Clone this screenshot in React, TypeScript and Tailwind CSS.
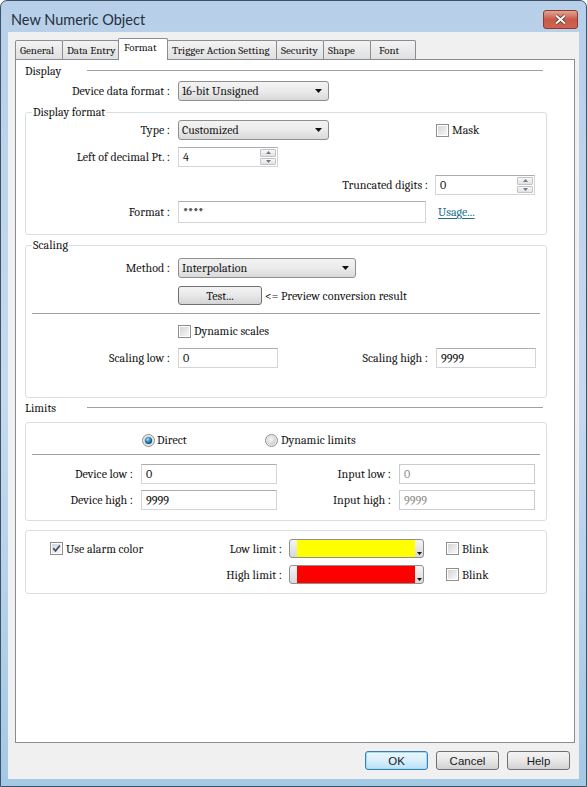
import type { ReactNode } from "react";

const Arrow = () => (
  <svg width="7" height="4" viewBox="0 0 7 4">
    <path d="M0 0h7L3.5 4z" fill="#111" />
  </svg>
);

const Select = ({ value, className }: { value: string; className: string }) => (
  <div
    className={`h-[20px] flex items-center justify-between pl-[3px] pr-[6px] rounded-[3px] border border-[#8e8f8f] bg-gradient-to-b from-[#f3f3f3] via-[#ebebeb] to-[#d9d9d9] ${className}`}
  >
    <span>{value}</span>
    <Arrow />
  </div>
);

const TextBox = ({
  value,
  className,
  disabled,
  h = "h-[20px]",
}: {
  value: string;
  className: string;
  disabled?: boolean;
  h?: string;
}) => (
  <div
    className={`${h} flex items-center pl-[4px] bg-white border ${
      disabled
        ? "border-[#c9ccd0] text-[#8e8e8e]"
        : "border-[#d2d5da] border-t-[#abadb3] text-[#111]"
    } ${className}`}
  >
    {value}
  </div>
);

const SpinBtn = ({ up }: { up?: boolean }) => (
  <div className="flex-1 flex items-center justify-center rounded-[1px] border border-[#c3c3c3] bg-gradient-to-b from-[#f8f8f8] to-[#e2e2e2]">
    <svg width="5" height="3" viewBox="0 0 5 3">
      <path d={up ? "M0 3h5L2.5 0z" : "M0 0h5L2.5 3z"} fill="#6d7a8a" />
    </svg>
  </div>
);

const Spin = ({ value }: { value: string }) => (
  <div className="w-[100px] h-[20px] flex bg-white border border-[#d2d5da] border-t-[#abadb3]">
    <div className="flex-1 flex items-center pl-[4px]">{value}</div>
    <div className="w-[18px] flex flex-col gap-px p-px">
      <SpinBtn up />
      <SpinBtn />
    </div>
  </div>
);

const CheckBox = ({ checked }: { checked?: boolean }) => (
  <div className="relative w-[13px] h-[13px] shrink-0 border border-[#8e8f8f] bg-white p-px">
    <div className="w-full h-full bg-gradient-to-br from-[#d6d6d6] to-[#f7f7f7]" />
    {checked && (
      <svg className="absolute left-[1px] top-[1px]" width="9" height="9" viewBox="0 0 9 9">
        <path d="M1.3 4.3L3.5 6.9L7.8 1.4" fill="none" stroke="#3d4f66" strokeWidth="1.7" />
      </svg>
    )}
  </div>
);

const Radio = ({ on }: { on?: boolean }) => (
  <svg width="13" height="13" viewBox="0 0 13 13" className="shrink-0">
    <defs>
      <radialGradient id={on ? "rOn" : "rOff"} cx="40%" cy="35%" r="65%">
        <stop offset="0" stopColor={on ? "#a9e0f4" : "#f6f6f6"} />
        <stop offset="0.55" stopColor={on ? "#2a86b4" : "#e3e3e3"} />
        <stop offset="1" stopColor={on ? "#0d4a70" : "#cfcfcf"} />
      </radialGradient>
    </defs>
    <circle cx="6.5" cy="6.5" r="6" fill="#ededed" stroke="#8e8f8f" />
    <circle cx="6.5" cy="6.5" r="4.6" fill="#d8d8d8" />
    <circle cx="6.5" cy="6.5" r={on ? 3.6 : 4.2} fill={`url(#${on ? "rOn" : "rOff"})`} />
  </svg>
);

const Sep = ({ className }: { className: string }) => (
  <div className={`h-[2px] border-t border-[#a0a0a0] border-b border-b-white ${className}`} />
);

const ColorPick = ({ fill }: { fill: string }) => (
  <div className="w-[135px] h-[19px] flex rounded-[3px] border border-[#8e8f8f] bg-gradient-to-b from-[#f5f5f5] to-[#d8d8d8] overflow-hidden">
    <div className="w-[7px]" />
    <div className={`flex-1 ${fill}`} />
    <div className="w-[8px] flex items-end justify-center pb-[2px]">
      <svg width="5" height="3" viewBox="0 0 5 3">
        <path d="M0 0h5L2.5 3z" fill="#111" />
      </svg>
    </div>
  </div>
);

const Lbl = ({ children, className }: { children: ReactNode; className: string }) => (
  <div className={`text-right shrink-0 ${className}`}>{children}</div>
);

const WinBtn = ({ label, primary }: { label: string; primary?: boolean }) => (
  <div
    className={`w-[63px] h-[19px] flex items-center justify-center rounded-[3px] border text-[11.5px] font-[family-name:'Liberation_Sans',Arial,sans-serif] text-[#1a1a1a] ${
      primary
        ? "border-[#3c7fb1] bg-gradient-to-b from-[#ecf7fd] via-[#d9effb] to-[#b9e1f7] shadow-[inset_0_0_0_1px_#9fdcf6]"
        : "border-[#707070] bg-gradient-to-b from-[#f3f3f3] via-[#e8e8e8] to-[#d2d2d2]"
    }`}
  >
    {label}
  </div>
);

const tabs = [
  { name: "General", w: "w-[48px]" },
  { name: "Data Entry", w: "w-[57px]" },
  { name: "Format", w: "w-[50px]", active: true },
  { name: "Trigger Action Setting", w: "w-[110px]" },
  { name: "Security", w: "w-[48px]" },
  { name: "Shape", w: "w-[48px]" },
  { name: "Font", w: "w-[46px]", pad: "pl-[8px]" },
];

export default function App() {
  return (
    <div className="w-[587px] h-[787px] flex flex-col border border-[#3f5368] rounded-t-[7px] bg-gradient-to-b from-[#b7cfe8] via-[#c6daef] to-[#a4c9e5] overflow-hidden">
      {/* title bar */}
      <div className="h-[31px] flex items-start justify-between pl-[10px] pr-[8px]">
        <span className="mt-[9px] text-[14.5px] leading-[20px] text-[#25303d] font-[family-name:Lato,'Noto_Sans',sans-serif]">
          New Numeric Object
        </span>
        <div className="mt-[9px] w-[35px] h-[19px] flex items-center justify-center rounded-[3px] border border-[#8a3a32] bg-gradient-to-b from-[#e3a493] via-[#c9584a] to-[#d0644f]">
          <svg width="13" height="11" viewBox="0 0 13 11">
            <path d="M2 1.5L11 9.5M11 1.5L2 9.5" stroke="#5a2a24" strokeWidth="3.4" />
            <path d="M2 1.5L11 9.5M11 1.5L2 9.5" stroke="#fff" strokeWidth="2" />
          </svg>
        </div>
      </div>

      {/* client */}
      <div className="mx-[7px] h-[747px] bg-[#f0f0f0] flex flex-col pl-[7px] font-serif font-[family-name:'Liberation_Serif','Times_New_Roman',serif] text-[12px] leading-[16px] text-[#151515]">
        <div className="mt-[6px] h-[21px] flex items-end">
          {tabs.map((t, i) =>
            t.active ? (
              <div
                key={t.name}
                className={`${t.w} h-[22px] -mb-px -ml-px relative z-10 flex items-center pl-[5px] pb-[3px] bg-white border border-b-0 border-[#898c95] rounded-t-[2px] text-[11px]`}
              >
                {t.name}
              </div>
            ) : (
              <div
                key={t.name}
                className={`${t.w} h-[19px] ${i > 0 ? "-ml-px" : ""} flex items-center ${t.pad ?? "pl-[4px]"} pt-[1px] border border-b-0 border-[#898c95] rounded-t-[2px] bg-gradient-to-b from-[#f3f3f3] to-[#e0e0e0] text-[11px]`}
              >
                {t.name}
              </div>
            )
          )}
        </div>

        {/* panel */}
        <div className="w-[560px] h-[684px] border border-[#898c95] bg-white pl-[9px] flex flex-col">
          {/* Display */}
          <div className="mt-[3px] h-[16px] flex items-center">
            <span>Display</span>
            <Sep className="ml-auto mr-[31px] w-[456px]" />
          </div>
          <div className="mt-[2px] flex items-center">
            <Lbl className="w-[145px]">Device data format :</Lbl>
            <Select value="16-bit Unsigned" className="ml-[8px] w-[151px]" />
          </div>

          <fieldset className="mt-[3px] w-[522px] border border-[#d5dfe5] rounded-[3px] pb-[11px]">
            <legend className="ml-[6px] px-[1px] leading-[16px]">Display format</legend>
            <div className="flex items-center">
              <Lbl className="w-[144px]">Type :</Lbl>
              <Select value="Customized" className="ml-[8px] w-[151px]" />
              <div className="ml-[107px] flex items-center">
                <CheckBox />
                <span className="ml-[3px]">Mask</span>
              </div>
            </div>
            <div className="mt-[7px] flex items-center">
              <Lbl className="w-[144px]">Left of decimal Pt. :</Lbl>
              <div className="ml-[8px]">
                <Spin value="4" />
              </div>
            </div>
            <div className="mt-[8px] flex items-center">
              <Lbl className="w-[402px]">Truncated digits :</Lbl>
              <div className="ml-[7px]">
                <Spin value="0" />
              </div>
            </div>
            <div className="mt-[6px] flex items-center">
              <Lbl className="w-[144px]">Format :</Lbl>
              <TextBox value="****" h="h-[22px]" className="ml-[8px] w-[248px]" />
              <span className="ml-[12px] text-[#1e6e8e] underline underline-offset-2">Usage...</span>
            </div>
          </fieldset>

          {/* Scaling */}
          <fieldset className="mt-[2px] w-[522px] border border-[#d5dfe5] rounded-[3px] pb-[29px]">
            <legend className="ml-[6px] px-[1px] leading-[16px]">Scaling</legend>
            <div className="mt-[5px] flex items-center">
              <Lbl className="w-[144px]">Method :</Lbl>
              <Select value="Interpolation" className="ml-[8px] w-[178px]" />
            </div>
            <div className="mt-[8px] flex items-center">
              <div className="ml-[152px] w-[84px] h-[19px] flex items-center justify-center rounded-[3px] border border-[#707070] bg-gradient-to-b from-[#f3f3f3] via-[#e8e8e8] to-[#d4d4d4]">
                Test...
              </div>
              <span className="ml-[3px]">&lt;= Preview conversion result</span>
            </div>
            <Sep className="mt-[8px] ml-[6px] w-[508px]" />
            <div className="mt-[9px] h-[14px] flex items-center">
              <div className="ml-[152px]">
                <CheckBox />
              </div>
              <span className="ml-[3px]">Dynamic scales</span>
            </div>
            <div className="mt-[10px] flex items-center">
              <Lbl className="w-[144px]">Scaling low :</Lbl>
              <TextBox value="0" className="ml-[8px] w-[100px]" />
              <Lbl className="w-[150px]">Scaling high :</Lbl>
              <TextBox value="9999" className="ml-[8px] w-[100px]" />
            </div>
          </fieldset>

          {/* Limits */}
          <div className="mt-[2px] h-[16px] flex items-center">
            <span>Limits</span>
            <Sep className="ml-auto mr-[31px] w-[456px]" />
          </div>
          <div className="mt-[6px] w-[522px] border border-[#d5dfe5] rounded-[3px] pb-[10px]">
            <div className="mt-[9px] h-[16px] flex items-center pl-[116px]">
              <div className="w-[123px] flex items-center">
                <Radio on />
                <span className="ml-[2px]">Direct</span>
              </div>
              <Radio />
              <span className="ml-[3px]">Dynamic limits</span>
            </div>
            <Sep className="mt-[6px] ml-[6px] w-[508px]" />
            <div className="mt-[8px] flex items-center">
              <Lbl className="w-[107px]">Device low :</Lbl>
              <TextBox value="0" className="ml-[8px] w-[136px]" />
              <Lbl className="w-[114px]">Input low :</Lbl>
              <TextBox value="0" disabled className="ml-[8px] w-[136px]" />
            </div>
            <div className="mt-[6px] flex items-center">
              <Lbl className="w-[107px]">Device high :</Lbl>
              <TextBox value="9999" className="ml-[8px] w-[136px]" />
              <Lbl className="w-[114px]">Input high :</Lbl>
              <TextBox value="9999" disabled className="ml-[8px] w-[136px]" />
            </div>
          </div>

          {/* alarm color */}
          <div className="mt-[9px] w-[522px] border border-[#d5dfe5] rounded-[3px] pb-[9px]">
            <div className="mt-[8px] h-[19px] flex items-center">
              <div className="w-[178px] flex items-center pl-[24px]">
                <CheckBox checked />
                <span className="ml-[3px]">Use alarm color</span>
              </div>
              <Lbl className="w-[78px]">Low limit :</Lbl>
              <div className="ml-[7px]">
                <ColorPick fill="bg-[#ffff00]" />
              </div>
              <div className="ml-[22px] flex items-center">
                <CheckBox />
                <span className="ml-[3px]">Blink</span>
              </div>
            </div>
            <div className="mt-[7px] h-[19px] flex items-center">
              <div className="w-[178px]" />
              <Lbl className="w-[78px]">High limit :</Lbl>
              <div className="ml-[7px]">
                <ColorPick fill="bg-[#ff0000]" />
              </div>
              <div className="ml-[22px] flex items-center">
                <CheckBox />
                <span className="ml-[3px]">Blink</span>
              </div>
            </div>
          </div>
        </div>

        {/* buttons */}
        <div className="mt-[8px] flex justify-end pr-[9px] gap-[8px]">
          <WinBtn label="OK" primary />
          <WinBtn label="Cancel" />
          <WinBtn label="Help" />
        </div>
      </div>
    </div>
  );
}
